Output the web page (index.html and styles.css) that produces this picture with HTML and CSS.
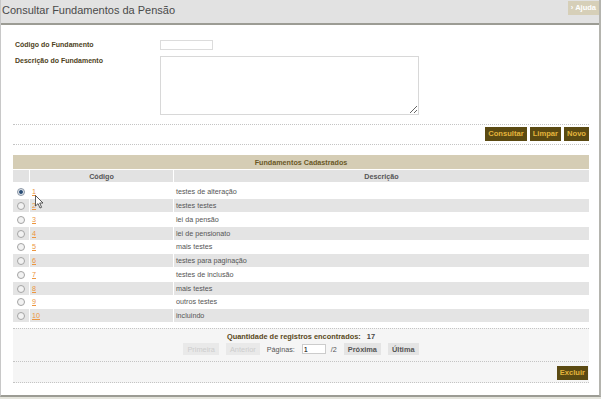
FILE: index.html
```html
<!DOCTYPE html>
<html>
<head>
    <title>Consultar Fundamentos da Pensão</title>
    <link rel="stylesheet" href="styles.css">
</head>
<body>
    <div class="page">
        <div class="header">
            <h1>Consultar Fundamentos da Pensão</h1>
            <a class="help" href="#">› Ajuda</a>
        </div>
        <div class="content">
            <form class="filter">
                <div class="field">
                    <label for="codigo">Código do Fundamento</label>
                    <input type="text" id="codigo" class="code-input">
                </div>
                <div class="field">
                    <label for="descricao">Descrição do Fundamento</label>
                    <textarea id="descricao"></textarea>
                </div>
            </form>
            <div class="actions">
                <button class="btn">Consultar</button>
                <button class="btn">Limpar</button>
                <button class="btn">Novo</button>
            </div>
            <div class="grid-wrap">
                <table class="grid">
                    <tr class="title-row"><td colspan="3">Fundamentos Cadastrados</td></tr>
                    <tr class="head-row"><td class="col-radio"></td><td class="col-code">Código</td><td>Descrição</td></tr>
                    <tr class="first"><td class="col-radio"><input type="radio" name="sel" checked></td><td class="col-code"><a href="#">1</a></td><td>testes de alteração</td></tr>
                    <tr class="alt"><td class="col-radio"><input type="radio" name="sel"></td><td class="col-code"><a href="#">2</a></td><td>testes testes</td></tr>
                    <tr><td class="col-radio"><input type="radio" name="sel"></td><td class="col-code"><a href="#">3</a></td><td>lei da pensão</td></tr>
                    <tr class="alt"><td class="col-radio"><input type="radio" name="sel"></td><td class="col-code"><a href="#">4</a></td><td>lei de pensionato</td></tr>
                    <tr><td class="col-radio"><input type="radio" name="sel"></td><td class="col-code"><a href="#">5</a></td><td>mais testes</td></tr>
                    <tr class="alt"><td class="col-radio"><input type="radio" name="sel"></td><td class="col-code"><a href="#">6</a></td><td>testes para paginação</td></tr>
                    <tr><td class="col-radio"><input type="radio" name="sel"></td><td class="col-code"><a href="#">7</a></td><td>testes de inclusão</td></tr>
                    <tr class="alt"><td class="col-radio"><input type="radio" name="sel"></td><td class="col-code"><a href="#">8</a></td><td>mais testes</td></tr>
                    <tr><td class="col-radio"><input type="radio" name="sel"></td><td class="col-code"><a href="#">9</a></td><td>outros testes</td></tr>
                    <tr class="alt"><td class="col-radio"><input type="radio" name="sel"></td><td class="col-code"><a href="#">10</a></td><td>incluindo</td></tr>
                </table>
                <svg class="cursor" width="10" height="14" viewBox="0 0 10 14">
                    <path d="M0.5 0.5 L0.5 11 L3 8.6 L5 13 L6.6 12.3 L4.7 8 L8 8 Z" fill="#fff" stroke="#333" stroke-width="0.8"/>
                </svg>
            </div>
            <div class="pager">
                <div class="count">Quantidade de registros encontrados: <b>17</b></div>
                <div class="pages">
                    <button class="pbtn" disabled>Primeira</button>
                    <button class="pbtn" disabled>Anterior</button>
                    <span>Páginas:</span>
                    <input type="text" class="page-input" value="1">
                    <span class="total">/2</span>
                    <button class="pbtn">Próxima</button>
                    <button class="pbtn">Última</button>
                </div>
            </div>
            <div class="bottom-actions">
                <button class="btn">Excluir</button>
            </div>
        </div>
    </div>
</body>
</html>
```

FILE: styles.css
```css
body {
    margin: 0;
    background: #e4e4dc;
    font-family: "Liberation Sans", Arial, sans-serif;
}

.page {
    width: 598px;
    height: 395px;
    background: white;
    border-left: 1px solid #c8c8c8;
    border-right: 2px solid #b4b4ae;
    border-bottom: 2px solid #9c9c94;
}

.header {
    display: flex;
    justify-content: space-between;
    align-items: flex-start;
    height: 23px;
    background: #e2e2e2;
    border-bottom: 2px solid #9c9c94;
}

.header h1 {
    margin: 4px 0 0 1px;
    font-size: 11px;
    font-weight: normal;
    line-height: 13px;
    color: #4a4a4a;
}

.help {
    margin: 1px 0 0;
    padding: 0 3px;
    height: 14px;
    line-height: 14px;
    background: #d6cfb8;
    color: white;
    font-size: 7.5px;
    font-weight: bold;
    text-decoration: none;
}

.content {
    padding: 0 10px 0 12px;
}

.filter {
    padding: 15px 0 9px 2px;
}

.field {
    display: flex;
    margin-bottom: 6px;
}

.field:last-child {
    margin-bottom: 0;
}

.field label {
    width: 145px;
    font-size: 7px;
    font-weight: bold;
    color: #4e4222;
    line-height: 10px;
}

.code-input {
    width: 51px;
    height: 8px;
    padding: 0;
    border: 1px solid #dcdcdc;
}

.field textarea {
    width: 257px;
    height: 57px;
    padding: 0;
    border: 1px solid #d8d8d8;
    resize: vertical;
}

.actions {
    display: flex;
    justify-content: flex-end;
    gap: 3px;
    padding: 2px 0 3px;
    border-top: 1px dotted #c4c4c4;
    border-bottom: 1px dotted #c4c4c4;
}

.btn {
    height: 14px;
    padding: 0 3px;
    border: none;
    background: #5b4a12;
    color: #e4b43c;
    font-family: inherit;
    font-size: 7.6px;
    font-weight: bold;
    line-height: 14px;
    cursor: pointer;
}

.grid-wrap {
    position: relative;
    margin-top: 10px;
}

.grid {
    width: 576px;
    border-collapse: separate;
    border-spacing: 0;
    font-size: 7.2px;
    color: #555;
}

.grid td {
    padding: 0 2px;
    border-bottom: 1px solid white;
    border-right: 1px solid white;
    line-height: 9px;
}

.grid td:last-child {
    border-right: none;
}

.grid tr {
    height: 13.75px;
}

.grid tr.title-row {
    height: 15px;
}

.grid tr.head-row {
    height: 13px;
}

.grid tr.first {
    height: 16.25px;
}

.grid tr.first td {
    padding-top: 2.5px;
}

.title-row td {
    background: #d5cdb5;
    color: #6a5826;
    font-weight: bold;
    text-align: center;
}

.head-row td {
    background: #e2e2e2;
    font-weight: bold;
    text-align: center;
}

.grid .col-radio {
    width: 16px;
    padding: 0;
    text-align: center;
}

.grid .col-code {
    width: 139px;
}

.grid tr.alt td {
    background: #e4e4e4;
}

.grid input[type="radio"] {
    appearance: none;
    width: 8px;
    height: 8px;
    margin: 0;
    border: 1px solid #a4a4a4;
    border-radius: 50%;
    background: #f2f2f2;
    vertical-align: middle;
}

.grid input[type="radio"]:checked {
    background: radial-gradient(circle, #24466c 0, #2e527a 35%, #dfe4ea 55%);
    border-color: #8a96a6;
}

.grid a {
    color: #ec9640;
}

.cursor {
    position: absolute;
    left: 22px;
    top: 40px;
}

.pager {
    margin-top: 5px;
    padding: 3px 0 6px;
    background: #f5f5f5;
    border-top: 1px dotted #c4c4c4;
    border-bottom: 1px dotted #c4c4c4;
    text-align: center;
    font-size: 7.2px;
    color: #555;
}

.count {
    font-size: 7.4px;
    font-weight: bold;
    color: #5a4a22;
    line-height: 10px;
}

.count b {
    color: #444;
    margin-left: 4px;
}

.pages {
    display: flex;
    justify-content: center;
    align-items: center;
    gap: 7px;
    margin-top: 1px;
}

.pbtn {
    height: 12px;
    padding: 0 4px;
    border: none;
    background: #e4e4e4;
    color: #555;
    font-family: inherit;
    font-size: 7.4px;
    font-weight: bold;
}

.pbtn:disabled {
    color: #cdcdcd;
    font-weight: normal;
    background: #e9e9e9;
}

.page-input {
    width: 20px;
    height: 8px;
    padding: 0 1px;
    border: 1px solid #ccc;
    font-family: inherit;
    font-size: 7.4px;
}

.total {
    margin-left: -2px;
}

.bottom-actions {
    display: flex;
    justify-content: flex-end;
    padding: 4px 1px 2px;
    background: #f5f5f5;
    border-bottom: 1px dotted #c4c4c4;
}
```
